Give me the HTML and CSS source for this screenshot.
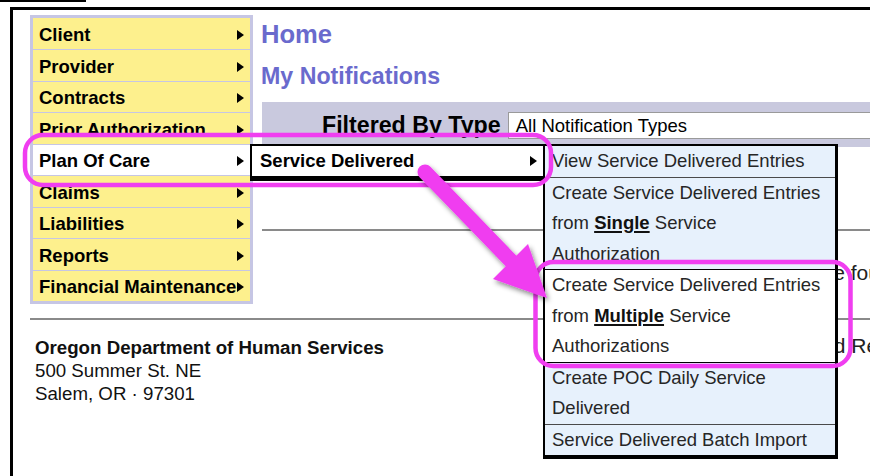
FILE: index.html
```html
<!DOCTYPE html>
<html lang="en">
<head>
<meta charset="utf-8">
<title>Home - My Notifications</title>
<link rel="stylesheet" href="styles.css">
</head>
<body>
  <div class="topline"></div>
  <div class="frame">
    <div class="layout">
      <ul class="sidemenu">
        <li>Client<span class="caret"></span></li>
        <li>Provider<span class="caret"></span></li>
        <li>Contracts<span class="caret"></span></li>
        <li>Prior Authorization<span class="caret"></span></li>
        <li class="active">Plan Of Care<span class="caret"></span></li>
        <li>Claims<span class="caret"></span></li>
        <li>Liabilities<span class="caret"></span></li>
        <li>Reports<span class="caret"></span></li>
        <li>Financial Maintenance<span class="caret"></span></li>
      </ul>
      <main class="main">
        <h1 class="title">Home</h1>
        <h2 class="subtitle">My Notifications</h2>
        <div class="filter">
          <span class="filter-label">Filtered By Type</span>
          <div class="select">All Notification Types</div>
        </div>
        <div class="rule"></div>
        <p class="empty">No notifications were found.</p>
      </main>
    </div>
    <footer class="footer">
      <div class="org">
        <strong>Oregon Department of Human Services</strong><br>
        500 Summer St. NE<br>
        Salem, OR · 97301
      </div>
      <div class="footer-links">Questions and Requests</div>
    </footer>
  </div>

  <!-- Plan Of Care fly-out menus -->
  <div class="flyout flyout-primary">Service Delivered<span class="caret"></span></div>
  <ul class="flyout flyout-secondary">
    <li>View Service Delivered Entries</li>
    <li>Create Service Delivered Entries<br>from <b>Single</b> Service<br>Authorization</li>
    <li class="current">Create Service Delivered Entries<br>from <b>Multiple</b> Service<br>Authorizations</li>
    <li>Create POC Daily Service<br>Delivered</li>
    <li>Service Delivered Batch Import</li>
  </ul>

  <!-- Callout marks: outlines and pointer arrow -->
  <svg class="markup" width="870" height="476" viewBox="0 0 870 476">
    <defs>
      <filter id="arrow-shadow" x="-30%" y="-30%" width="170%" height="170%">
        <feDropShadow dx="2" dy="3" stdDeviation="2.5" flood-color="#000" flood-opacity="0.45"/>
      </filter>
    </defs>
    <rect x="25" y="135" width="526" height="50" rx="18" fill="none" stroke="#f03ef0" stroke-width="4.5"/>
    <rect x="535.5" y="262" width="315" height="104" rx="18" fill="none" stroke="#f03ef0" stroke-width="4.5"/>
    <g filter="url(#arrow-shadow)" fill="#f03ef0">
      <line x1="425" y1="172" x2="514" y2="264" stroke="#f03ef0" stroke-width="15" stroke-linecap="round"/>
      <polygon points="547,298 528,244 493,279"/>
    </g>
  </svg>
</body>
</html>
```
FILE: styles.css
```css
* {
  box-sizing: border-box;
}

html,
body {
  margin: 0;
}

body {
  position: relative;
  width: 870px;
  height: 476px;
  overflow: hidden;
  background: #fff;
  color: #000;
  font-family: "Liberation Sans", Arial, sans-serif;
}

.topline {
  width: 86px;
  height: 2px;
  background: #000;
}

.frame {
  margin: 5px 0 0 10px;
  height: 500px;
  border-top: 3px solid #000;
  border-left: 3px solid #000;
}

.layout {
  display: grid;
  grid-template-columns: 223px 1fr;
  align-items: start;
  padding: 5px 0 0 17px;
}

/* Left navigation */
.sidemenu {
  margin: 0;
  padding: 0;
  list-style: none;
  background: #fdf08d;
  border: 3px solid #c6c6e4;
}

.sidemenu li {
  display: flex;
  align-items: center;
  justify-content: space-between;
  height: 31.5px;
  padding: 3px 6px 0;
  border-top: 1px solid #c6c6e4;
  font-size: 18.5px;
  font-weight: bold;
  white-space: nowrap;
}

.sidemenu li:first-child {
  height: 31px;
  border-top: 0;
}

.sidemenu li.active {
  background: #fff;
}

.caret {
  flex: none;
  width: 0;
  height: 0;
  border-left: 7px solid #000;
  border-top: 5.5px solid transparent;
  border-bottom: 5.5px solid transparent;
}

/* Main column */
.main {
  min-width: 0;
  overflow: hidden;
  padding-left: 8px;
}

.title {
  margin: 4px 0 0;
  font-size: 25.6px;
  line-height: 30px;
  color: #6a6acd;
}

.subtitle {
  margin: 13px 0 0;
  font-size: 23.2px;
  line-height: 28px;
  color: #6a6acd;
}

.filter {
  display: flex;
  align-items: flex-start;
  height: 45px;
  margin: 12px 0 0 1px;
  padding: 10px 0 0 60px;
  overflow: hidden;
  background: #c9c9de;
}

.filter-label {
  margin-right: 7px;
  font-size: 23.2px;
  font-weight: bold;
  line-height: 27px;
  white-space: nowrap;
}

.select {
  flex: none;
  width: 420px;
  height: 27px;
  padding-left: 7px;
  border: 1px solid #9a9a9a;
  background: #fff;
  font-size: 18.5px;
  line-height: 25px;
  white-space: nowrap;
}

.rule {
  height: 2px;
  margin: 82px 0 0 1px;
  background: #8a8a8a;
}

.empty {
  margin: 30px 0 0 389px;
  font-size: 21px;
  line-height: 24px;
  color: #222;
  white-space: nowrap;
}

/* Footer */
.footer {
  display: grid;
  grid-template-columns: 680px 1fr;
  margin: 14px 0 0 17px;
  padding-top: 16px;
  border-top: 2px solid #8a8a8a;
}

.org {
  padding-left: 5px;
  font-size: 18.7px;
  line-height: 23px;
  color: #111;
}

.footer-links {
  margin-top: -2px;
  font-size: 21px;
  line-height: 24px;
  color: #222;
  white-space: nowrap;
}

/* Fly-out menus */
.flyout {
  position: absolute;
}

.flyout-primary {
  left: 250px;
  top: 144px;
  width: 295px;
  height: 37px;
  display: flex;
  align-items: center;
  justify-content: space-between;
  padding: 0 6px 0 8px;
  border: 2px solid #000;
  border-bottom-width: 5px;
  background: #fff;
  font-size: 18.5px;
  font-weight: bold;
}

.flyout-secondary {
  left: 543px;
  top: 144px;
  width: 295px;
  margin: 0;
  padding: 0;
  list-style: none;
  border: 2px solid #000;
  border-right-width: 3px;
  border-bottom-width: 4px;
  background: #e7f1fc;
  color: #262626;
  font-size: 18.5px;
  line-height: 30.5px;
}

.flyout-secondary li {
  padding-left: 7px;
  border-top: 1px solid #4a4a4a;
  white-space: nowrap;
}

.flyout-secondary li:first-child {
  border-top: 0;
}

.flyout-secondary li.current {
  background: #fff;
  border-top-color: #000;
  border-bottom: 1px solid #000;
}

.flyout-secondary li.current + li {
  border-top: 0;
}

.flyout-secondary b {
  color: #111;
  text-decoration: underline;
  text-decoration-thickness: 2px;
  text-underline-offset: 2px;
}

/* Callout layer */
.markup {
  position: absolute;
  left: 0;
  top: 0;
  pointer-events: none;
}
```
